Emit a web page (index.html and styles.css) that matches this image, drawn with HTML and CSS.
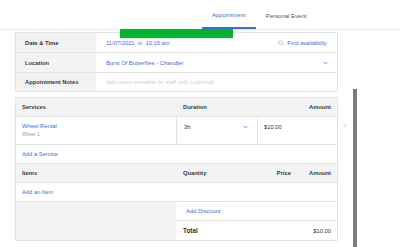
FILE: index.html
```html
<!DOCTYPE html>
<html lang="en">
<head>
    <meta charset="UTF-8">
    <meta name="viewport" content="width=device-width, initial-scale=1.0">
    <title>Appointment</title>
    <link rel="stylesheet" href="styles.css">
</head>
<body>
    <div class="tabs">
        <div class="tab active">Appointment</div>
        <div class="tab">Personal Event</div>
    </div>
    <div class="redact"></div>
    <div class="scroll-thumb"></div>

    <div class="main">
        <div class="details">
            <div class="label">Date &amp; Time</div>
            <div class="value">
                <span class="link">11/07/2021</span>
                <span class="muted">at</span>
                <span class="link">10:15 am</span>
                <span class="find">
                    <svg width="6" height="6" viewBox="0 0 10 10"><circle cx="4.2" cy="4.2" r="3.2" fill="none" stroke="#b8b8b8" stroke-width="1.2"/><path d="M6.6 6.6 L9 9" stroke="#b8b8b8" stroke-width="1.2"/></svg>
                    <span class="link">Find availability</span>
                </span>
            </div>
            <div class="label">Location</div>
            <div class="value">
                <span class="link">Burst Of Butterflies - Chandler</span>
                <svg class="chev" width="5" height="4" viewBox="0 0 10 8"><path d="M1.5 2 L5 5.5 L8.5 2" fill="none" stroke="#3d6ee0" stroke-width="1.6"/></svg>
            </div>
            <div class="label last">Appointment Notes</div>
            <div class="value last">
                <span class="placeholder">Add notes viewable by staff only (optional)</span>
            </div>
        </div>

        <div class="ticket">
            <div class="row head cols3">
                <div class="cell">Services</div>
                <div class="cell">Duration</div>
                <div class="cell right">Amount</div>
            </div>
            <div class="row service cols3">
                <div class="cell">
                    <div class="link">Wheel Rental</div>
                    <div class="sub">Wheel 1</div>
                </div>
                <div class="cell divided duration">
                    <span>3h</span>
                    <svg width="5" height="4" viewBox="0 0 10 8"><path d="M1.5 2 L5 5.5 L8.5 2" fill="none" stroke="#3d6ee0" stroke-width="1.6"/></svg>
                </div>
                <div class="cell divided">$10.00</div>
                <span class="remove">&times;</span>
            </div>
            <div class="row single">
                <div class="cell link">Add a Service</div>
            </div>
            <div class="row head cols4">
                <div class="cell">Items</div>
                <div class="cell">Quantity</div>
                <div class="cell right">Price</div>
                <div class="cell right">Amount</div>
            </div>
            <div class="row single">
                <div class="cell link">Add an Item</div>
            </div>
            <div class="summary">
                <div class="summary-blank"></div>
                <div class="summary-lines">
                    <div class="line discount link">Add Discount</div>
                    <div class="line total">
                        <span>Total</span>
                        <span>$10.00</span>
                    </div>
                </div>
            </div>
        </div>
    </div>
</body>
</html>
```

FILE: styles.css
```css
body {
    margin: 0;
    font-family: "Liberation Sans", Arial, sans-serif;
    font-size: 5.8px;
    color: #333;
    background: #fff;
    position: relative;
    height: 247px;
    overflow: hidden;
}
.tabs {
    display: flex;
    height: 29px;
    padding-left: 202px;
    border-bottom: 1px solid #e8e8e8;
}
.tab {
    display: flex;
    align-items: center;
    padding: 0 9px 0 10px;
    height: 29px;
    box-sizing: border-box;
    font-size: 6px;
    color: #555;
}
.tab.active {
    color: #3d6ee0;
    border-bottom: 2px solid #3d6ee0;
    padding-top: 2px;
    padding-right: 10px;
}
.tab + .tab {
    padding-top: 2px;
}
.redact {
    position: absolute;
    left: 120px;
    top: 29px;
    width: 113px;
    height: 9px;
    background: #02b32d;
    box-shadow: 0 1px 2px rgba(0, 0, 0, 0.15);
}
.scroll-thumb {
    position: absolute;
    left: 353px;
    top: 89px;
    width: 4px;
    height: 170px;
    background: #7c7c7c;
}
.main {
    width: 323px;
    margin-left: 15px;
    padding-top: 2px;
}
.link {
    color: #3d6ee0;
}
.muted {
    color: #999;
    margin: 0 3px;
}
.details {
    display: grid;
    grid-template-columns: 80px 1fr;
    border: 1px solid #e4e4e4;
}
.label, .value {
    height: 19px;
    border-bottom: 1px solid #e4e4e4;
    display: flex;
    align-items: center;
}
.label {
    background: #f3f3f3;
    padding-left: 9px;
    font-weight: bold;
    color: #3a3a3a;
}
.value {
    padding: 0 10px;
}
.label.last, .value.last {
    height: 18px;
    border-bottom: none;
}
.find {
    margin-left: auto;
    display: flex;
    align-items: center;
    gap: 3px;
}
.chev {
    margin-left: auto;
    margin-right: -1px;
}
.placeholder {
    color: #cfcfcf;
}
.ticket {
    margin-top: 5px;
    border: 1px solid #e4e4e4;
}
.row {
    display: grid;
    border-bottom: 1px solid #e4e4e4;
    position: relative;
}
.cols3 {
    grid-template-columns: 160px 81px 1fr;
}
.cols4 {
    grid-template-columns: 160px 1fr 60px 40px;
}
.single {
    grid-template-columns: 1fr;
    height: 18px;
}
.row.head {
    height: 18px;
    background: #f3f3f3;
    font-weight: bold;
    color: #3a3a3a;
}
.cell {
    display: flex;
    align-items: center;
    padding: 0 6px 0 6px;
}
.row .cell:first-child {
    padding-left: 6px;
}
.cols3 .cell:nth-child(2), .cols4 .cell:nth-child(2) {
    padding-left: 7px;
}
.cell.right {
    justify-content: flex-end;
}
.row.service {
    height: 27px;
}
.service .cell:first-child {
    flex-direction: column;
    align-items: flex-start;
    justify-content: flex-start;
    padding-top: 6px;
}
.sub {
    font-size: 4.8px;
    color: #999;
    margin-top: 3px;
}
.divided {
    border-left: 1px solid #e4e4e4;
    align-items: flex-start;
    padding-top: 7px;
}
.duration {
    justify-content: space-between;
    padding-right: 9px;
}
.duration svg {
    margin-top: 1px;
}
.remove {
    position: absolute;
    right: -10px;
    top: 5px;
    font-size: 7px;
    color: #cfcfcf;
}
.row.single + .row.single {
    height: 19px;
}
.summary {
    display: grid;
    grid-template-columns: 160px 1fr;
}
.summary-blank {
    background: #f3f3f3;
}
.line {
    display: flex;
    align-items: center;
    justify-content: space-between;
}
.discount {
    height: 18px;
    padding-left: 10px;
    border-bottom: 1px solid #e4e4e4;
}
.total {
    height: 19px;
    padding: 0 6px 0 7px;
    font-size: 6.4px;
    font-weight: bold;
    color: #333;
}
.total span + span {
    font-size: 5.8px;
    font-weight: normal;
}
```
